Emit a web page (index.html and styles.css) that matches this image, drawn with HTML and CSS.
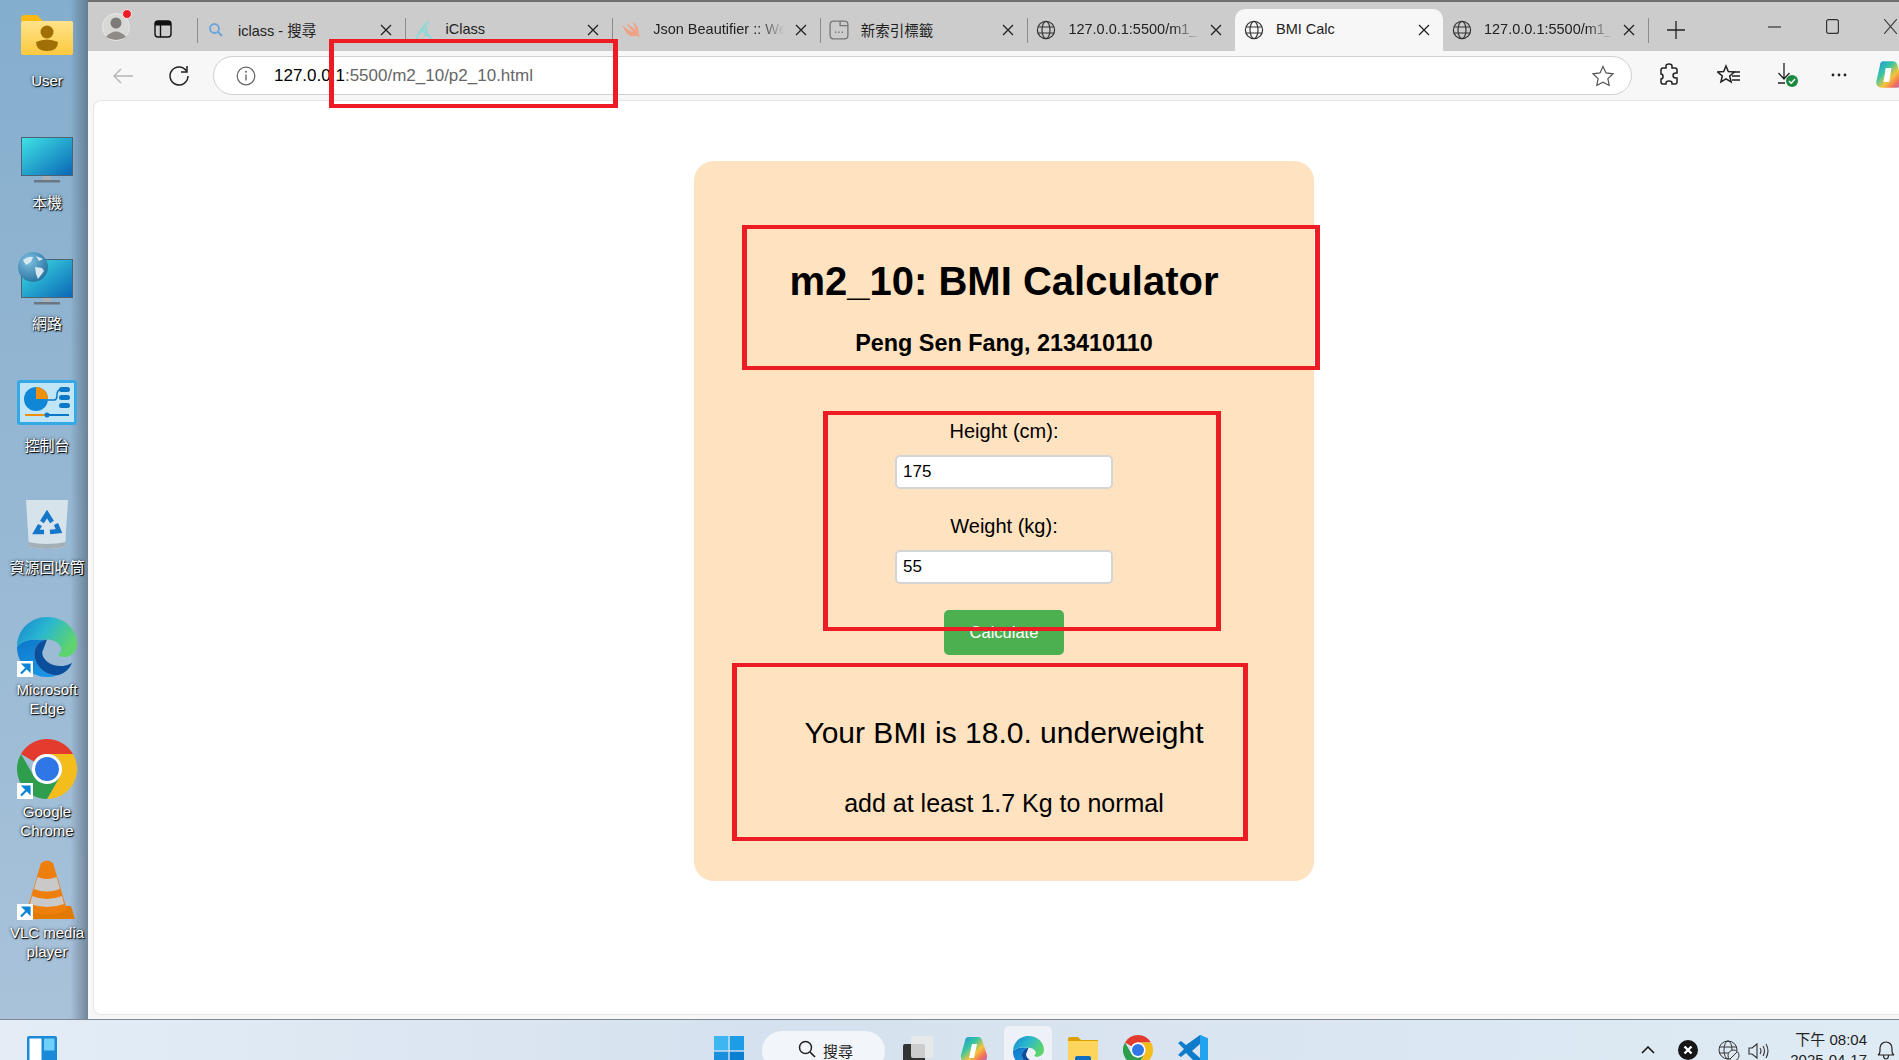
FILE: index.html
```html
<!DOCTYPE html>
<html lang="zh-Hant">
<head>
    <meta charset="UTF-8">
    <meta name="viewport" content="width=device-width, initial-scale=1.0">
    <title>BMI Calc</title>
    <link rel="stylesheet" href="styles.css">
</head>
<body>
    <svg class="defs" aria-hidden="true">
        <defs>
            <linearGradient id="gEdgeTop" x1="0" y1="0" x2="1" y2="0.5"><stop offset="0" stop-color="#1583cf"/><stop offset="0.5" stop-color="#2ab8cf"/><stop offset="1" stop-color="#5ed46c"/></linearGradient>
            <linearGradient id="gEdgeBlue" x1="0" y1="0" x2="0.4" y2="1"><stop offset="0" stop-color="#0d78c8"/><stop offset="1" stop-color="#1a94e6"/></linearGradient>
            <linearGradient id="gScreen" x1="0" y1="0" x2="1" y2="1"><stop offset="0" stop-color="#3fe3e6"/><stop offset="1" stop-color="#0a66b5"/></linearGradient>
            <linearGradient id="gFolder" x1="0" y1="0" x2="0" y2="1"><stop offset="0" stop-color="#ffe28a"/><stop offset="1" stop-color="#fcc93f"/></linearGradient>
            <radialGradient id="gGlobe" cx="0.35" cy="0.3" r="0.8"><stop offset="0" stop-color="#7fc0e0"/><stop offset="1" stop-color="#1f6d9c"/></radialGradient>
            <linearGradient id="gCopilot" x1="0" y1="0" x2="1" y2="1"><stop offset="0" stop-color="#1f8fe8"/><stop offset="0.35" stop-color="#37c6a0"/><stop offset="0.6" stop-color="#f5c53a"/><stop offset="0.8" stop-color="#f2705a"/><stop offset="1" stop-color="#b060e0"/></linearGradient>

            <symbol id="iGlobe" viewBox="0 0 20 20"><g fill="none" stroke="#333" stroke-width="1.2"><circle cx="10" cy="10" r="8.6"/><ellipse cx="10" cy="10" rx="4" ry="8.6"/><path d="M1.8 7h16.4M1.8 13h16.4"/></g></symbol>
            <symbol id="iClose" viewBox="0 0 12 12"><path d="M1 1l10 10M11 1L1 11" fill="none" stroke="#222" stroke-width="1.3"/></symbol>
            <symbol id="iEdge" viewBox="0 0 48 48">
                <path d="M24 18C14 18 5 17 0 24C0 37 10 48 24 48C27 48 30 47.500 32 46.500C24 47 16 41 14 32C13 25 17 19 24 18Z" fill="url(#gEdgeBlue)"/>
                <path d="M24 18C17 19 13 25 14 32C16 41 24 47 32 46.500C37 46 42 42 44 36.500C39 40 31 40 26 37C21 34 19 29 21 26C22 23 23 21 24 18Z" fill="#0b4f9c"/>
                <path d="M0 24C0 10 11 0 24 0C38 0 48 10 48 21C48 28 43 32 38 32C35 32 33 31 33 30C35 28 36 26 35 24C33 20 29 18 24 18C14 18 5 17 0 24Z" fill="url(#gEdgeTop)"/>
            </symbol>
            <symbol id="iChrome" viewBox="0 0 48 48">
                <path d="M24 0A24 24 0 0 1 44.800 12H24A12 12 0 0 0 13.600 18L3.200 12A24 24 0 0 1 24 0Z" fill="#e33b2e"/>
                <path d="M44.800 12A24 24 0 0 1 24 48L34.400 30A12 12 0 0 0 24 12Z" fill="#f3bd1b"/>
                <path d="M3.200 12A24 24 0 0 0 24 48L34.400 30A12 12 0 0 1 13.600 30Z" fill="#2f9e4c"/>
                <circle cx="24" cy="24" r="12" fill="#fff"/><circle cx="24" cy="24" r="9.600" fill="#2f77e6"/>
            </symbol>
            <symbol id="iShortcut" viewBox="0 0 16 16"><rect width="16" height="16" fill="#fff"/><path d="M4 12.500L11 5.500M6.500 3.500H12.500V9.500Z" fill="#0a84d6" stroke="#0a84d6" stroke-width="2.200"/></symbol>
            <symbol id="iMonitor" viewBox="0 0 52 46"><rect x="0.500" y="0.500" width="51" height="38" fill="url(#gScreen)" stroke="#4d6272"/><rect x="22" y="39" width="8" height="4" fill="#aab2b8"/><rect x="13" y="43" width="26" height="2.500" fill="#6b7680"/></symbol>
        </defs>
    </svg>

    <div class="screen">
        <div class="top">
            <aside class="desktop">
                <div class="desk-item item-user">
                    <svg class="ic-user" viewBox="0 0 52 40"><path d="M0 4a4 4 0 0 1 4-4h12l6 6H0z" fill="#fdb813"/><rect y="6" width="52" height="34" rx="2" fill="url(#gFolder)"/><circle cx="26" cy="17" r="6.500" fill="#a06f05"/><path d="M15 27q11-5 22 0q0 9-11 9t-11-9z" fill="#a06f05"/></svg>
                    <span class="desk-label">User</span>
                </div>
                <div class="desk-item item-pc">
                    <svg class="ic-monitor"><use href="#iMonitor"/></svg>
                    <span class="desk-label">本機</span>
                </div>
                <div class="desk-item item-net">
                    <svg class="ic-net" viewBox="0 0 55 53"><use href="#iMonitor" x="3" y="7" width="52" height="46"/><circle cx="15" cy="15" r="15" fill="url(#gGlobe)"/><path d="M5 8q5-4 10-3l-2 5-5 3zM17 15l7 1 2 3-6 8-2-5zM18 4l7 3-4 2z" fill="#d8e8ef"/></svg>
                    <span class="desk-label">網路</span>
                </div>
                <div class="desk-item item-ctl">
                    <svg class="ic-ctl" viewBox="0 0 60 45"><rect width="60" height="45" rx="3" fill="#34a9e6"/><rect x="3" y="3" width="54" height="39" fill="#bfe5f7"/><circle cx="19" cy="19" r="12" fill="#1087d6"/><path d="M19 7a12 12 0 0 1 12 12H19z" fill="#ef8f0c"/><path d="M31 20h6q3 0 3-5t3-5" fill="none" stroke="#0c78c8" stroke-width="1.500"/><rect x="42" y="7" width="11" height="5" rx="2.500" fill="#0c78c8"/><rect x="42" y="15" width="11" height="5" rx="2.500" fill="#0c78c8"/><rect x="42" y="23" width="11" height="5" rx="2.500" fill="#0c78c8"/><rect x="8" y="34" width="22" height="2" fill="#ef8f0c"/><rect x="30" y="34" width="22" height="2" fill="#0c78c8"/><circle cx="30" cy="35" r="2.500" fill="#0c78c8"/></svg>
                    <span class="desk-label">控制台</span>
                </div>
                <div class="desk-item item-bin">
                    <svg class="ic-bin" viewBox="0 0 44 50"><path d="M1 0h42l-3 47q-18 4-36 0z" fill="#d7e3ea"/><path d="M3 42q19 4 38 0l-1 5q-18 4-36 0z" fill="#a4b0b8"/><g fill="none" stroke="#1477c9" stroke-width="4.500"><path d="M17 22l5-8 5 8"/><path d="M31 24l3 7-9 1"/><path d="M19 32h-8l4-7"/></g></svg>
                    <span class="desk-label">資源回收筒</span>
                </div>
                <div class="desk-item item-edge">
                    <div class="shortcut-wrap">
                        <svg class="ic-app"><use href="#iEdge"/></svg>
                        <svg class="ic-shortcut"><use href="#iShortcut"/></svg>
                    </div>
                    <span class="desk-label">Microsoft Edge</span>
                </div>
                <div class="desk-item item-chrome">
                    <div class="shortcut-wrap">
                        <svg class="ic-app"><use href="#iChrome"/></svg>
                        <svg class="ic-shortcut"><use href="#iShortcut"/></svg>
                    </div>
                    <span class="desk-label">Google Chrome</span>
                </div>
                <div class="desk-item item-vlc">
                    <div class="shortcut-wrap">
                        <svg class="ic-app" viewBox="0 0 60 60"><path d="M6 46L2 59h56l-4-13z" fill="#e07b00"/><path d="M24 3q6-5 12 0l14 47q-20 9-40 0z" fill="#ef7f0d"/><path d="M20.500 17q9.500 4 19 0l3.500 12q-13 5-26 0z" fill="#c9c9c9"/><path d="M15 36q15 6 30 0l2 8q-17 6-34 0z" fill="#c9c9c9"/></svg>
                        <svg class="ic-shortcut"><use href="#iShortcut"/></svg>
                    </div>
                    <span class="desk-label">VLC media player</span>
                </div>
            </aside>

            <div class="browser">
                <div class="tabstrip">
                    <div class="strip-left">
                        <svg class="avatar" viewBox="0 0 30 34"><circle cx="14" cy="19" r="13.500" fill="#d8d8d6" stroke="#e8e8e8"/><circle cx="14" cy="15" r="5.500" fill="#7d7a77"/><path d="M4 29q10-11 20 0q-10 6-20 0z" fill="#8f8c88"/><circle cx="25" cy="6" r="4.500" fill="#ef1c25" stroke="#eee"/></svg>
                        <svg class="tabs-icon" viewBox="0 0 18 18"><rect x="1" y="1" width="16" height="16" rx="3" fill="none" stroke="#111" stroke-width="1.400"/><path d="M1 5.500V4a3 3 0 0 1 3-3h10a3 3 0 0 1 3 3v1.500z" fill="#111"/><path d="M6.500 5v12" stroke="#111" stroke-width="1.400"/></svg>
                    </div>
                    <div class="tab">
                        <svg class="favicon" viewBox="0 0 20 20"><circle cx="8.500" cy="8.500" r="4.500" fill="none" stroke="#6ba4d8" stroke-width="1.800"/><path d="M12 12l4 4" stroke="#6ba4d8" stroke-width="2"/></svg>
                        <span class="tab-title">iclass - 搜尋</span>
                        <svg class="tab-x"><use href="#iClose"/></svg>
                    </div>
                    <div class="tab">
                        <svg class="favicon" viewBox="0 0 16 16"><path d="M12 1Q5 7 2 15M6 8q4 2 8 7M9 5q2 5 0 8" fill="none" stroke="#8fd8d8" stroke-width="1.700"/></svg>
                        <span class="tab-title">iClass</span>
                        <svg class="tab-x"><use href="#iClose"/></svg>
                    </div>
                    <div class="tab">
                        <svg class="favicon" viewBox="0 0 16 16"><path d="M1 4q5 5 9 6Q6 6 4 2q5 4 8 6q-1-4-3-7q6 4 5 10q1 2 1 3q-2-2-5-1q-5 1-9-9z" fill="#f0a287"/></svg>
                        <span class="tab-title fade">Json Beautifier :: We</span>
                        <svg class="tab-x"><use href="#iClose"/></svg>
                    </div>
                    <div class="tab">
                        <svg class="favicon" viewBox="0 0 18 18"><rect x="1" y="1" width="16" height="16" rx="3" fill="none" stroke="#777" stroke-width="1.200"/><path d="M10 1v4h7" fill="none" stroke="#777" stroke-width="1.200"/><path d="M5.500 11h1M8.500 11h1M11.500 11h1" stroke="#666" stroke-width="1.300"/></svg>
                        <span class="tab-title">新索引標籤</span>
                        <svg class="tab-x"><use href="#iClose"/></svg>
                    </div>
                    <div class="tab">
                        <svg class="favicon"><use href="#iGlobe"/></svg>
                        <span class="tab-title fade">127.0.0.1:5500/m1_</span>
                        <svg class="tab-x"><use href="#iClose"/></svg>
                    </div>
                    <div class="tab active">
                        <svg class="favicon"><use href="#iGlobe"/></svg>
                        <span class="tab-title">BMI Calc</span>
                        <svg class="tab-x"><use href="#iClose"/></svg>
                    </div>
                    <div class="tab after-active">
                        <svg class="favicon"><use href="#iGlobe"/></svg>
                        <span class="tab-title fade">127.0.0.1:5500/m1_</span>
                        <svg class="tab-x"><use href="#iClose"/></svg>
                    </div>
                    <div class="new-tab">
                        <svg viewBox="0 0 18 18"><path d="M9 0v18M0 9h18" stroke="#222" stroke-width="1.300"/></svg>
                    </div>
                    <div class="win-controls">
                        <svg class="win-min" viewBox="0 0 13 2"><path d="M0 1h13" stroke="#333" stroke-width="1.200"/></svg>
                        <svg class="win-max" viewBox="0 0 13 15"><rect x="0.600" y="0.600" width="11.800" height="13.800" rx="2" fill="none" stroke="#333" stroke-width="1.200"/></svg>
                        <svg class="win-close" viewBox="0 0 13 15"><path d="M0 0l13 15M13 0L0 15" stroke="#333" stroke-width="1.100"/></svg>
                    </div>
                </div>

                <div class="toolbar">
                    <svg class="back" viewBox="0 0 22 18"><path d="M21 9H2M9 2L2 9l7 7" fill="none" stroke="#b5b5b5" stroke-width="1.400"/></svg>
                    <svg class="reload" viewBox="0 0 22 22"><path d="M18.500 6A9 9 0 1 0 20 11" fill="none" stroke="#222" stroke-width="1.500"/><path d="M19 1v6h-6" fill="none" stroke="#222" stroke-width="1.500"/></svg>
                    <div class="address">
                        <svg class="info" viewBox="0 0 20 20"><circle cx="10" cy="10" r="8.800" fill="none" stroke="#666" stroke-width="1.200"/><path d="M10 8.500v6" stroke="#666" stroke-width="1.400"/><circle cx="10" cy="5.800" r="1" fill="#666"/></svg>
                        <span class="url"><b>127.0.0.1</b>:5500/m2_10/p2_10.html</span>
                        <svg class="star" viewBox="0 0 22 22"><path d="M11 1.500l3 6.400 7 .9-5.100 4.800 1.300 6.900L11 17.200l-6.200 3.300 1.300-6.900L1 8.800l7-.9z" fill="none" stroke="#555" stroke-width="1.200"/></svg>
                    </div>
                    <svg class="tool ext" viewBox="0 0 20 24"><path d="M7 3q0-2 3-2t3 2v2h3q2 0 2 2v3h-1q-3 0-3 2.500t3 2.500h1v4q0 2-2 2h-3v-1q0-2-3-2t-3 2v1H4q-2 0-2-2v-3q2 0 2-2.500T2 11V7q0-2 2-2h3z" fill="none" stroke="#222" stroke-width="1.500"/></svg>
                    <span class="tool-sep"></span>
                    <svg class="tool fav" viewBox="0 0 24 22"><path d="M9 2l2.300 5.500 6 .5-4.600 4 1.400 6L9 14.800 3.900 18l1.400-6L.7 8l6-.5z" fill="none" stroke="#222" stroke-width="1.500"/><path d="M16 8h7M15 12h8M15 16h8" stroke="#222" stroke-width="1.300"/></svg>
                    <svg class="tool dl" viewBox="0 0 22 26"><path d="M7 1v15M1.500 11L7 17l5.500-6M1 21h7" fill="none" stroke="#222" stroke-width="1.300"/><circle cx="15" cy="19" r="6" fill="#198a3f"/><path d="M12 19l2.200 2.200L18 17" fill="none" stroke="#fff" stroke-width="1.500"/></svg>
                    <svg class="tool more" viewBox="0 0 16 4"><circle cx="2" cy="2" r="1.400" fill="#222"/><circle cx="8" cy="2" r="1.400" fill="#222"/><circle cx="14" cy="2" r="1.400" fill="#222"/></svg>
                    <svg class="tool copilot" viewBox="0 0 24 26"><path d="M8 1h8q3 0 4 3l4 14q1 5-4 6H6q-5-1-4-6L5 5q0-4 3-4z" fill="url(#gCopilot)"/><path d="M10 7h5l-2 12H8z" fill="#fff"/></svg>
                </div>

                <div class="page-frame">
                    <main class="page">
                        <div class="card">
                            <h1>m2_10: BMI Calculator</h1>
                            <h3>Peng Sen Fang, 213410110</h3>
                            <label class="field-label label-first" for="height">Height (cm):</label>
                            <input class="field" id="height" type="text" value="175">
                            <label class="field-label" for="weight">Weight (kg):</label>
                            <input class="field" id="weight" type="text" value="55">
                            <button class="calc-btn">Calculate</button>
                            <p class="bmi-line">Your BMI is 18.0. underweight</p>
                            <p class="advice-line">add at least 1.7 Kg to normal</p>
                        </div>
                    </main>
                </div>
            </div>
        </div>

        <footer class="taskbar">
            <svg class="widgets" viewBox="0 0 30 30"><rect width="30" height="30" rx="2" fill="#1a8ad8"/><rect x="2.500" y="2.500" width="12" height="25" fill="#fff"/><rect x="17" y="2.500" width="10.500" height="12" fill="#6fd0fa"/></svg>
            <svg class="start" viewBox="0 0 30 30"><rect width="14.300" height="14.300" fill="#3db6f2"/><rect x="15.700" width="14.300" height="14.300" fill="#1d9de6"/><rect y="15.700" width="14.300" height="14.300" fill="#1a90dd"/><rect x="15.700" y="15.700" width="14.300" height="14.300" fill="#0b7fd1"/></svg>
            <div class="search-pill">
                <svg viewBox="0 0 18 18"><circle cx="7.500" cy="7.500" r="6" fill="none" stroke="#222" stroke-width="1.500"/><path d="M12 12l5 5" stroke="#222" stroke-width="1.700"/></svg>
                <span>搜尋</span>
            </div>
            <svg class="task-view" viewBox="0 0 30 30"><rect y="8" width="22" height="22" rx="2" fill="#333"/><rect x="8" y="0" width="22" height="22" rx="2" fill="#e9e9e9" fill-opacity="0.85"/></svg>
            <svg class="tb-copilot" viewBox="0 0 28 30"><path d="M9 1h9q3 0 4 3l5 15q1 6-5 7H6q-6-1-5-7L5 5q0-4 4-4z" fill="url(#gCopilot)"/><path d="M12 8h5l-3 14H9z" fill="#fff"/></svg>
            <div class="tb-active"><svg class="tb-edge"><use href="#iEdge"/></svg></div>
            <svg class="tb-folder" viewBox="0 0 30 32"><path d="M0 2q0-2 2-2h8l3 3h17v4H0z" fill="#dca100"/><rect y="4" width="30" height="28" fill="#fdd45c"/><rect x="7" y="19" width="16" height="13" rx="2" fill="#0e6fc0"/></svg>
            <svg class="tb-chrome"><use href="#iChrome"/></svg>
            <svg class="tb-code" viewBox="0 0 30 32"><path d="M22 0l8 3.500v25L22 32 8 18l-5 4-3-2 6-6-6-6 3-2 5 4z" fill="#0f7ccb"/><path d="M22 0l8 3.500v25L22 32z" fill="#21a3ef"/><path d="M22 9l-8 7 8 7z" fill="#dbe6f2"/></svg>

            <div class="tray">
                <svg class="chev" viewBox="0 0 14 8"><path d="M1 7l6-6 6 6" fill="none" stroke="#111" stroke-width="1.500"/></svg>
                <svg class="tray-x" viewBox="0 0 20 20"><circle cx="10" cy="10" r="10" fill="#161616"/><path d="M6.500 6.500l7 7M13.500 6.500l-7 7" stroke="#fff" stroke-width="2.400"/></svg>
                <svg class="tray-net" viewBox="0 0 22 22"><g fill="none" stroke="#333" stroke-width="1"><circle cx="10" cy="10" r="9"/><ellipse cx="10" cy="10" rx="4" ry="9"/><path d="M1 7h18M1 13h18"/></g><circle cx="15.500" cy="15.500" r="5.500" fill="#dfe9f2" stroke="#333"/><path d="M12 19l7-7" stroke="#333"/></svg>
                <svg class="tray-vol" viewBox="0 0 22 18"><path d="M1 6h3l5-4v14l-5-4H1z" fill="none" stroke="#333" stroke-width="1.100"/><path d="M12 6q2 3 0 6M15 4q3 5 0 10M18 2q4 7 0 14" fill="none" stroke="#333" stroke-width="1.100"/></svg>
                <div class="clock"><span>下午 08:04</span><span>2025-04-17</span></div>
                <svg class="bell" viewBox="0 0 18 20"><path d="M1 15q2-1 2-4V8a6 6 0 0 1 12 0v3q0 3 2 4zM6.500 15q0 4 2.500 4t2.500-4" fill="none" stroke="#222" stroke-width="1.200"/></svg>
            </div>
        </footer>

        <!-- red marks drawn over the screenshot -->
        <div class="mark mark-url"></div>
        <div class="mark mark-title"></div>
        <div class="mark mark-form"></div>
        <div class="mark mark-result"></div>
    </div>
</body>
</html>
```

FILE: styles.css
```css
* {
    box-sizing: border-box;
}
html, body {
    margin: 0;
    padding: 0;
    overflow: hidden;
}
body {
    font-family: "Liberation Sans", "Noto Sans CJK TC", Arial, sans-serif;
    background: #fff;
}
.defs {
    display: block;
    width: 0;
    height: 0;
}
svg {
    display: block;
    flex: none;
}
.screen {
    position: relative;
    width: 1899px;
    height: 1060px;
    overflow: hidden;
    display: flex;
    flex-direction: column;
}
.top {
    flex: 1;
    display: flex;
    min-height: 0;
}

/* desktop icons */
.desktop {
    width: 88px;
    flex: none;
    display: flex;
    flex-direction: column;
    align-items: center;
    padding-left: 6px;
    background:
        linear-gradient(to right, rgba(70, 85, 100, 0) 70px, rgba(70, 85, 100, 0.55) 88px),
        linear-gradient(#84aecd, #a9c2da);
}
.desk-item {
    display: flex;
    flex-direction: column;
    align-items: center;
    width: 82px;
}
.desk-label {
    color: #fff;
    font-size: 15px;
    line-height: 19px;
    text-align: center;
    text-shadow: 1px 1px 1px #000, 0 0 3px #1a2a3a;
    width: 82px;
}
.item-user { padding-top: 15px; }
.ic-user { width: 52px; height: 40px; margin-bottom: 16px; }
.item-pc { padding-top: 47px; }
.ic-monitor { width: 52px; height: 46px; margin-bottom: 10px; }
.item-net { padding-top: 40px; }
.ic-net { width: 55px; height: 53px; margin: 0 0 9px -3px; }
.item-ctl { padding-top: 47px; }
.ic-ctl { width: 60px; height: 45px; margin-bottom: 11px; }
.item-bin { padding-top: 45px; }
.ic-bin { width: 44px; height: 50px; margin-bottom: 8px; }
.item-edge { padding-top: 40px; }
.item-chrome { padding-top: 21px; }
.item-vlc { padding-top: 20px; }
.shortcut-wrap {
    position: relative;
    width: 60px;
    height: 60px;
    margin-bottom: 3px;
}
.ic-app {
    width: 60px;
    height: 60px;
}
.ic-shortcut {
    position: absolute;
    left: 0;
    bottom: 0;
    width: 16px;
    height: 16px;
}

/* browser chrome */
.browser {
    flex: 1;
    min-width: 0;
    display: flex;
    flex-direction: column;
    background: #f7f7f7;
}
.tabstrip {
    height: 51px;
    flex: none;
    display: flex;
    align-items: flex-end;
    background: #cccccc;
    border-top: 2px solid #6e6e6e;
}
.strip-left {
    width: 109px;
    height: 49px;
    flex: none;
    display: flex;
    align-items: center;
    padding-left: 14px;
}
.avatar { width: 30px; height: 34px; margin-top: -3px; }
.tabs-icon { width: 18px; height: 18px; margin-left: 22px; margin-top: 5px; }
.tab {
    width: 207.6px;
    height: 42px;
    flex: none;
    display: flex;
    align-items: center;
    padding: 0 13px 0 9px;
    font-size: 14.5px;
    color: #222;
    background: linear-gradient(#8c8c8c, #8c8c8c) left 9px / 1px 25px no-repeat;
}
.tab.active {
    width: 208px;
    background: #f7f7f7;
    border-radius: 10px 10px 0 0;
}
.tab.after-active {
    width: 205px;
    background: none;
}
.favicon {
    width: 20px;
    height: 20px;
    margin-right: 12px;
}
.tab-title {
    flex: 1;
    min-width: 0;
    white-space: nowrap;
    margin-top: -2px;
}
.fade {
    -webkit-mask-image: linear-gradient(to right, #000 78%, transparent 98%);
    mask-image: linear-gradient(to right, #000 78%, transparent 98%);
}
.tab-x {
    width: 12px;
    height: 12px;
    margin-left: 8px;
}
.new-tab {
    width: 60px;
    height: 42px;
    flex: none;
    padding: 12px 0 0 19px;
    background: linear-gradient(#8c8c8c, #8c8c8c) left 9px / 1px 25px no-repeat;
}
.new-tab svg { width: 18px; height: 18px; }
.win-controls {
    flex: 1;
    height: 49px;
    display: flex;
    align-items: flex-start;
    padding-top: 17px;
}
.win-min { width: 13px; height: 2px; margin: 7px 0 0 60px; }
.win-max { width: 13px; height: 15px; margin: 0 0 0 45px; }
.win-close { width: 13px; height: 15px; margin-left: 45px; }

.toolbar {
    height: 49px;
    flex: none;
    display: flex;
    align-items: center;
    padding-left: 24px;
    overflow: hidden;
}
.back { width: 22px; height: 18px; margin-right: 34px; }
.reload { width: 22px; height: 22px; margin-right: 23px; }
.address {
    width: 1419px;
    height: 39px;
    flex: none;
    display: flex;
    align-items: center;
    padding: 0 17px 0 22px;
    background: #fff;
    border: 1px solid #cfcfcf;
    border-radius: 20px;
}
.info { width: 20px; height: 20px; }
.url {
    flex: 1;
    margin-left: 18px;
    font-size: 17px;
    color: #666;
}
.url b {
    font-weight: 400;
    color: #000;
}
.star { width: 22px; height: 22px; }
.tool { margin-top: -1px; }
.ext { width: 20px; height: 24px; margin-left: 27px; }
.tool-sep { width: 1px; height: 24px; background: #c8c8c8; margin-left: 20px; }
.fav { width: 24px; height: 22px; margin-left: 18px; }
.dl { width: 22px; height: 26px; margin-left: 36px; }
.more { width: 16px; height: 4px; margin-left: 32px; }
.copilot { width: 28px; height: 30px; margin-left: 27px; }

/* page */
.page-frame {
    flex: 1;
    min-height: 0;
    padding: 0 0 4px 5px;
    display: flex;
}
.page {
    flex: 1;
    background: #fff;
    border: 1px solid #e6e6e6;
    border-right: 0;
    border-radius: 8px 0 0 8px;
    padding: 60px 0 0 600px;
}
.card {
    width: 620px;
    height: 720px;
    background: #ffe2c0;
    border-radius: 20px;
    display: flex;
    flex-direction: column;
    align-items: center;
    padding-top: 97px;
    color: #000;
}
h1 {
    margin: 0;
    font-size: 40px;
    line-height: 46px;
    font-weight: 700;
}
h3 {
    margin: 25px 0 0;
    font-size: 23.4px;
    line-height: 28px;
    font-weight: 700;
}
.field-label {
    font-size: 20px;
    line-height: 24px;
    margin-top: 25px;
}
.label-first {
    margin-top: 62px;
}
.field {
    display: block;
    width: 218px;
    height: 34px;
    margin-top: 12px;
    padding: 0 6px;
    font-family: inherit;
    font-size: 17px;
    color: #000;
    background: #fff;
    border: 2px solid #d4d4d4;
    border-radius: 5px;
}
.calc-btn {
    width: 120px;
    height: 45px;
    margin-top: 26px;
    padding: 0;
    font-family: inherit;
    font-size: 16.5px;
    color: #fff;
    background: #4caf50;
    border: none;
    border-radius: 5px;
}
.bmi-line {
    margin: 61px 0 0;
    font-size: 30px;
    line-height: 34px;
}
.advice-line {
    margin: 39px 0 0;
    font-size: 25px;
    line-height: 28px;
}

/* taskbar */
.taskbar {
    height: 41px;
    flex: none;
    display: flex;
    align-items: flex-start;
    border-top: 1px solid #7f8790;
    background: linear-gradient(to right, #e4edf6, #d6e1ef 40%, #d9e4f0 60%, #deebf4);
    overflow: hidden;
}
.widgets { width: 30px; height: 30px; margin: 16px 0 0 27px; }
.start { width: 30px; height: 30px; margin: 16px 0 0 657px; }
.search-pill {
    width: 123px;
    height: 40px;
    margin: 11px 0 0 18px;
    display: flex;
    padding: 9px 0 0 36px;
    gap: 7px;
    background: #f2f5fa;
    border-radius: 20px;
    font-size: 15px;
    color: #222;
}
.search-pill svg { width: 18px; height: 18px; }
.task-view { width: 30px; height: 30px; margin: 16px 0 0 18px; }
.tb-copilot { width: 28px; height: 30px; margin: 16px 0 0 27px; }
.tb-active {
    width: 48px;
    height: 40px;
    margin: 6px 0 0 16px;
    padding: 10px 0 0 9px;
    background: #eef2f8;
    border-radius: 5px 5px 0 0;
}
.tb-edge { width: 31px; height: 31px; }
.tb-folder { width: 30px; height: 32px; margin: 17px 0 0 16px; }
.tb-chrome { width: 30px; height: 30px; margin: 15px 0 0 25px; }
.tb-code { width: 30px; height: 32px; margin: 15px 0 0 25px; }
.tray {
    flex: 1;
    display: flex;
    align-items: flex-start;
    padding-left: 433px;
}
.chev { width: 14px; height: 8px; margin-top: 26px; }
.tray-x { width: 20px; height: 20px; margin: 20px 0 0 23px; }
.tray-net { width: 22px; height: 22px; margin: 20px 0 0 20px; }
.tray-vol { width: 22px; height: 18px; margin: 22px 0 0 8px; }
.clock {
    display: flex;
    flex-direction: column;
    align-items: flex-end;
    width: 80px;
    margin-left: 17px;
    padding-top: 10px;
    font-size: 15px;
    line-height: 20px;
    color: #222;
    white-space: nowrap;
}
.bell { width: 18px; height: 20px; margin: 20px 0 0 10px; }

/* red boxes */
.mark {
    position: absolute;
    border: 5px solid #ed1c24;
    border-width: 4px 5px;
}
.mark-url { left: 329px; top: 39px; width: 289px; height: 69px; }
.mark-title { left: 742px; top: 225px; width: 578px; height: 145px; }
.mark-form { left: 823px; top: 411px; width: 398px; height: 220px; }
.mark-result { left: 732px; top: 663px; width: 516px; height: 178px; }
```
